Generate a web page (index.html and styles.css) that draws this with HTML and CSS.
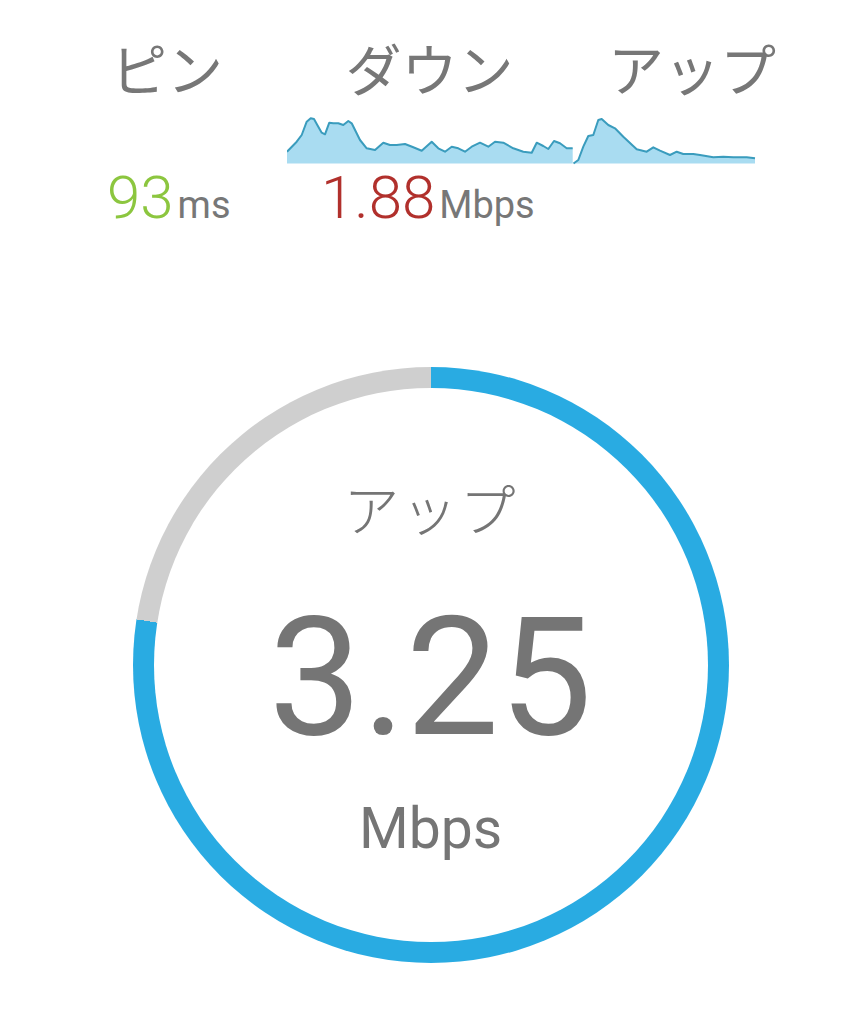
FILE: index.html
```html
<!DOCTYPE html>
<html>
<head>
  <title>スピードテスト</title>
  <link rel="stylesheet" href="styles.css">
</head>
<body>
  <div class="summary">
    <div class="title title-ping">ピン</div>
    <div class="title title-down">ダウン</div>
    <div class="title title-up">アップ</div>

    <svg class="graph" width="470" height="52" viewBox="0 0 470 52">
      <!-- download -->
      <polygon class="graph-fill" points="0,38.7 9.7,28.7 14.7,22 19.7,8.7 23.7,5.3 27,6 30.3,12 34.7,19.7 38,21.3 42.3,9.7 46.3,10.3 51.3,10.3 56.3,12 61.3,8 64.7,10.3 73,27 79.7,35.3 88,37 96.3,29.7 103,32 109.7,32 118,31 126.3,34.3 134.7,37.7 144.7,28.7 151.3,35.3 158,38.7 164.7,33.7 171.3,35.3 178,38.7 184.7,33.7 193,29.7 201.3,33.7 208,28.7 216.3,29.7 226.3,35.3 236.3,38.7 244.7,39.7 249.7,29.7 256.3,33 261.3,36 267,28 273,30.3 279.7,35.3 285.7,35.3 285.7,50.5 0,50.5"/>
      <polyline class="graph-line" points="0,38.7 9.7,28.7 14.7,22 19.7,8.7 23.7,5.3 27,6 30.3,12 34.7,19.7 38,21.3 42.3,9.7 46.3,10.3 51.3,10.3 56.3,12 61.3,8 64.7,10.3 73,27 79.7,35.3 88,37 96.3,29.7 103,32 109.7,32 118,31 126.3,34.3 134.7,37.7 144.7,28.7 151.3,35.3 158,38.7 164.7,33.7 171.3,35.3 178,38.7 184.7,33.7 193,29.7 201.3,33.7 208,28.7 216.3,29.7 226.3,35.3 236.3,38.7 244.7,39.7 249.7,29.7 256.3,33 261.3,36 267,28 273,30.3 279.7,35.3 285.7,35.3"/>
      <!-- upload -->
      <polygon class="graph-fill" points="286.5,50.5 291.3,47 296.3,33.7 301.3,23 306.3,22 311.3,7 314.7,6 321.3,12 328,15.3 336.3,23.7 349.7,36.3 359.7,38.7 366.3,34.3 373,37.7 383,42 389.7,38.7 396.3,41 406.3,41 413,42 426.3,44.3 436.3,43.7 446.3,44.3 459.7,44.3 468,45.3 468,50.5"/>
      <polyline class="graph-line" points="286.5,50.5 291.3,47 296.3,33.7 301.3,23 306.3,22 311.3,7 314.7,6 321.3,12 328,15.3 336.3,23.7 349.7,36.3 359.7,38.7 366.3,34.3 373,37.7 383,42 389.7,38.7 396.3,41 406.3,41 413,42 426.3,44.3 436.3,43.7 446.3,44.3 459.7,44.3 468,45.3"/>
    </svg>

    <div class="value value-ping"><span class="num ping">93</span><span class="unit">ms</span></div>
    <div class="value value-down"><span class="num down">1.88</span><span class="unit">Mbps</span></div>
  </div>

  <div class="gauge">
    <div class="gauge-inner">
      <div class="gauge-label">アップ</div>
      <div class="gauge-value">3.25</div>
      <div class="gauge-unit">Mbps</div>
    </div>
  </div>
</body>
</html>
```

FILE: styles.css
```css
body {
  font-family: Roboto, "Noto Sans CJK JP", sans-serif;
  background-color: #fff;
  color: #757575;
  margin: 0;
  padding: 0;
}

.summary {
  display: grid;
  grid-template-columns: 287px 285px 240px;
  padding-top: 39px;
}

.title {
  font-family: "Noto Sans CJK JP", sans-serif;
  font-size: 56px;
  line-height: 1;
  text-align: center;
  color: #777;
}

.title-ping {
  padding-left: 47px;
}

.graph {
  grid-column: 2 / 4;
  display: block;
  margin-top: 18px;
}

.graph-fill {
  fill: #a9dcf1;
}

.graph-line {
  fill: none;
  stroke: #3a9cbd;
  stroke-width: 2;
  stroke-linejoin: round;
}

.value {
  grid-row: 3;
  margin-top: 3px;
  line-height: 1;
  white-space: nowrap;
}

.value-ping {
  grid-column: 1;
  padding-left: 107px;
}

.value-down {
  grid-column: 2;
  padding-left: 34px;
}

.num {
  font-size: 60px;
  font-weight: 300;
}

.ping {
  color: #8cc63f;
}

.down {
  color: #b1302c;
}

.unit {
  font-size: 38px;
  margin-left: 4px;
  color: #777;
}

.gauge {
  width: 596px;
  height: 596px;
  margin: 139px auto 0;
  padding: 21px;
  box-sizing: border-box;
  border-radius: 50%;
  background: conic-gradient(#29abe2 0deg 278.8deg, #cfcfcf 278.8deg 360deg);
}

.gauge-inner {
  height: 100%;
  border-radius: 50%;
  background-color: #fff;
  display: flex;
  flex-direction: column;
  align-items: center;
  padding-top: 91px;
  box-sizing: border-box;
}

.gauge-label {
  font-family: "Noto Sans CJK JP", sans-serif;
  font-size: 56px;
  font-weight: 300;
  line-height: 1;
  letter-spacing: 2px;
}

.gauge-value {
  font-size: 166px;
  line-height: 1;
  margin-top: 60px;
  color: #757575;
}

.gauge-unit {
  font-size: 57px;
  line-height: 1;
  margin-top: 39px;
}
```
